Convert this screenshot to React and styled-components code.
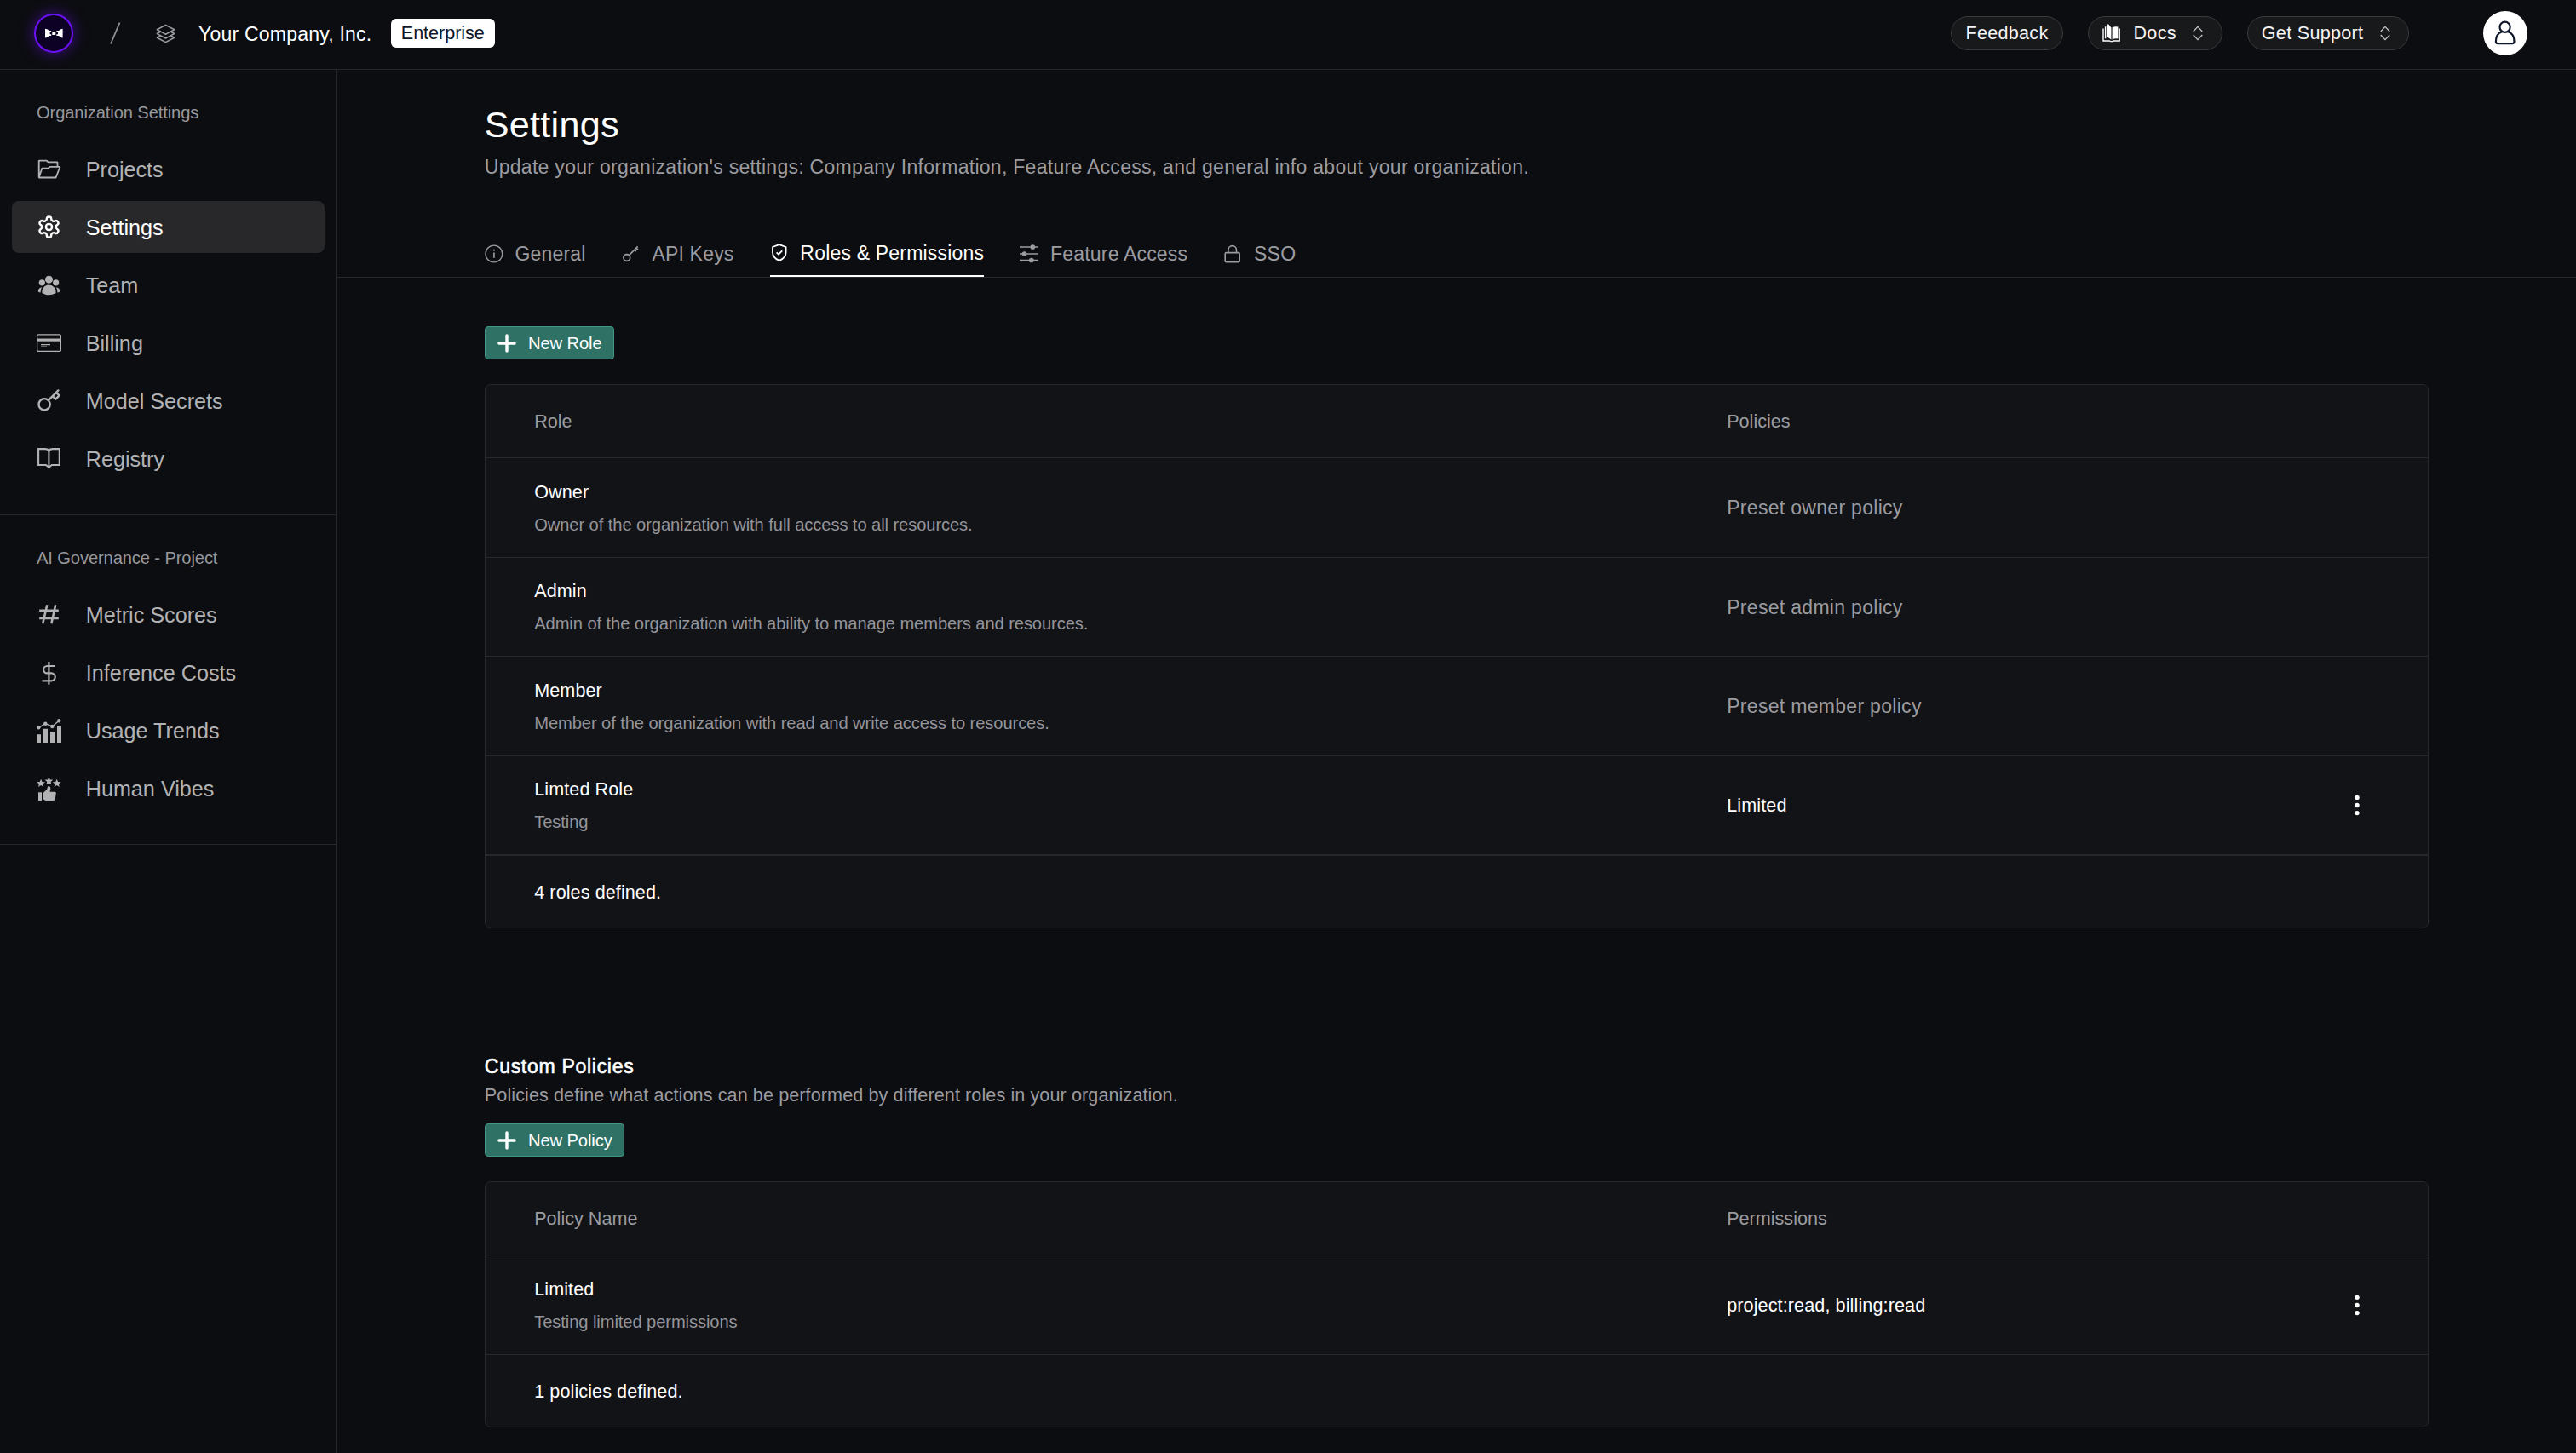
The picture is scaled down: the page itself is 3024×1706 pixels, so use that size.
import React from "react";
import styled, { createGlobalStyle } from "styled-components";
import { VscFolderOpened } from "react-icons/vsc";
import { LuSettings } from "react-icons/lu";
import { FiKey } from "react-icons/fi";
import { HiUserGroup, HiOutlineSquare3Stack3D } from "react-icons/hi2";

const GlobalStyle = createGlobalStyle`
  * {
    box-sizing: border-box;
  }
  body {
    margin: 0;
    background: #0c0d10;
    color: #ffffff;
    font-family: "Liberation Sans", Arial, sans-serif;
    font-size: 21.6px;
  }
`;

const Page = styled.div`
  display: flex;
  flex-direction: column;
  height: 1706px;
  overflow: hidden;
`;

const Header = styled.header`
  display: flex;
  align-items: center;
  justify-content: space-between;
  height: 82px;
  padding: 0 57px 3px 40px;
  border-bottom: 1px solid #27282b;
`;

const HeaderGroup = styled.div`
  display: flex;
  align-items: center;
`;

const Logo = styled.div`
  width: 46px;
  height: 46px;
  border: 2px solid #6a11f5;
  border-radius: 50%;
  background: #0e0126;
  box-shadow: 0 0 18px rgba(106, 17, 245, 0.55);
  & > svg {
    display: block;
    margin: -2px;
  }
`;

const Slash = styled.svg`
  margin-left: 43px;
`;

const StackIcon = styled(HiOutlineSquare3Stack3D)`
  width: 25px;
  height: 25px;
  margin-left: 40px;
  color: #9b9ba0;
`;

const Company = styled.div`
  margin-left: 26px;
  padding-top: 1px;
  font-size: 23.04px;
  line-height: 34px;
  letter-spacing: 0.2px;
`;

const PlanBadge = styled.div`
  margin-left: 22.5px;
  padding: 0 12px;
  border-radius: 6px;
  background: #ffffff;
  color: #0f172a;
  line-height: 34px;
  letter-spacing: -0.05px;
`;

const PillButton = styled.button`
  display: flex;
  align-items: center;
  gap: 14.4px;
  height: 40px;
  margin-left: ${props => (props.$first ? "0" : "29px")};
  padding: 0 16.3px;
  border: 1px solid #3a3a3d;
  border-radius: 20px;
  background: #18191b;
  color: #f4f4f5;
  font-family: inherit;
  font-size: 21.6px;
  letter-spacing: 0.28px;
`;

const Avatar = styled.div`
  width: 52px;
  height: 52px;
  margin-left: 87px;
  border-radius: 50%;
  background: #ffffff;
  color: #0f172a;
`;

const Body = styled.div`
  display: flex;
  flex: 1;
`;

const Sidebar = styled.nav`
  width: 396px;
  border-right: 1px solid #27282b;
`;

const NavSection = styled.section`
  padding: 36px 14px 28px;
  border-bottom: 1px solid #27282b;
`;

const NavHeading = styled.div`
  padding-left: 29px;
  margin-bottom: 21px;
  color: #97979c;
  font-size: 20.16px;
  line-height: 29px;
  letter-spacing: -0.12px;
`;

const NavItem = styled.div`
  display: flex;
  align-items: center;
  gap: 28.7px;
  height: 61px;
  margin-bottom: 7px;
  padding-left: 29px;
  border-radius: 8px;
  background: ${props => (props.$active ? "#28282a" : "transparent")};
  color: ${props => (props.$active ? "#ffffff" : "#b2b2b4")};
  font-size: 25.2px;
  & > svg {
    width: 29px;
    height: 29px;
  }
  & > span {
    padding-top: 2px;
  }
`;

const Main = styled.main`
  flex: 1;
`;

const PageHead = styled.div`
  padding: 35px 172.8px 0;
`;

const Title = styled.h1`
  margin: 0;
  font-size: 43.2px;
  font-weight: 400;
  line-height: 58px;
  letter-spacing: 0.25px;
`;

const Subtitle = styled.p`
  margin: 3.5px 0 0;
  color: #9b9ba0;
  font-size: 23.04px;
  line-height: 34.5px;
  letter-spacing: 0.27px;
`;

const TabBar = styled.div`
  display: flex;
  align-items: flex-end;
  gap: 42.2px;
  height: 113px;
  padding-left: 172.8px;
  border-bottom: 1px solid #27282b;
`;

const Tab = styled.div`
  display: flex;
  align-items: center;
  gap: 13.6px;
  padding-bottom: ${props => (props.$active ? "9.5px" : "10px")};
  border-bottom: ${props => (props.$active ? "2px solid #ffffff" : "none")};
  color: ${props => (props.$active ? "#ffffff" : "#9b9ba0")};
  font-size: 23.04px;
  line-height: 34px;
  letter-spacing: 0.18px;
`;

const Content = styled.div`
  padding: 57px 172.8px 0;
`;

const CreateButton = styled.button`
  display: flex;
  align-items: center;
  gap: 14.2px;
  height: 39px;
  padding: 1px 13.8px 0 14px;
  border: 1px solid #3f9786;
  border-radius: 4px;
  background: #2f7265;
  color: #ffffff;
  font-family: inherit;
  font-size: 20.16px;
  letter-spacing: -0.1px;
`;

const Table = styled.div`
  margin-top: 29px;
  border: 1px solid #27282b;
  border-radius: 7px;
  background: #121317;
`;

const TableRow = styled.div`
  display: grid;
  grid-template-columns: 1400px 1fr 40px;
  align-items: center;
  height: 116.5px;
  padding: 0 63px 0 57.4px;
  border-bottom: 1px solid #27282b;
`;

const TableHead = styled(TableRow)`
  height: 86px;
  color: #9b9ba0;
`;

const TableFoot = styled.div`
  display: flex;
  align-items: center;
  height: ${props => (props.$divided ? "85px" : "84px")};
  padding: 2px 0 0 57.4px;
  border-top: ${props => (props.$divided ? "1px solid #27282b" : "none")};
  letter-spacing: 0.08px;
`;

const Name = styled.div`
  line-height: 31px;
  letter-spacing: 0.08px;
`;

const Description = styled.div`
  margin-top: 9px;
  color: #94949a;
  font-size: 20.16px;
  line-height: 28px;
  letter-spacing: -0.09px;
`;

const Value = styled.div`
  padding-top: 2px;
  color: ${props => (props.$preset ? "#9b9ba0" : "#ffffff")};
  font-size: ${props => (props.$preset ? "23.04px" : "21.6px")};
  letter-spacing: ${props => (props.$preset ? "0.29px" : "0.1px")};
`;

const Dots = styled.svg`
  justify-self: center;
`;

const PolicySection = styled.section`
  padding-top: 144.5px;
`;

const SectionTitle = styled.h2`
  margin: 0;
  font-size: 23.04px;
  font-weight: 400;
  line-height: 34px;
  letter-spacing: 0.7px;
  -webkit-text-stroke: 0.6px #ffffff;
`;

const SectionText = styled.p`
  margin: 1px 0 17.5px;
  color: #9b9ba0;
  line-height: 32px;
  letter-spacing: 0.09px;
`;

const BillingIcon = () => (
  <svg viewBox="0 0 29 29" fill="none" stroke="currentColor">
    <rect x="0.6" y="4.8" width="27.8" height="19.6" rx="1.6" strokeWidth="1.3" />
    <path d="M0.6 11.1h27.8" strokeWidth="3.2" />
    <path d="M5 16.7h11M5 19.2h7" strokeWidth="1.3" />
  </svg>
);

const RegistryIcon = () => (
  <svg viewBox="0 0 29 29" fill="none" stroke="currentColor" strokeWidth="2.1">
    <path d="M2.1 3.1h8.2q3 0 4.1 2.6q1.1-2.6 4.1-2.6h8.3V22h-8.9l-3.5 2.6L10.9 22H2.1z" />
    <path d="M14.4 5.5V24" />
  </svg>
);

const HashIcon = () => (
  <svg viewBox="0 0 29 29" fill="none" stroke="currentColor" strokeWidth="2.6">
    <path d="M12.3 3.3L7.2 25.3M22.2 3.3L17.3 25.3M3.2 9.8h22.6M3.2 19h22.6" />
  </svg>
);

const DollarIcon = () => (
  <svg viewBox="0 0 29 29" fill="none" stroke="currentColor" strokeWidth="2.2">
    <path d="M14.4 2v26.7" />
    <path d="M21 7h-8.7a4.2 4.2 0 0 0 0 8.4h5a4.45 4.45 0 0 1 0 8.9H6.5" />
  </svg>
);

const TrendsIcon = () => (
  <svg viewBox="0 0 29 29" fill="currentColor">
    <path d="M0 19.3h5V29H0zM8 12.7h5V29H8zM16 16h5v13h-5zM24 9.7h5V29h-5z" />
    <circle cx="2.3" cy="11.3" r="2.2" />
    <circle cx="10.3" cy="6.7" r="2.2" />
    <circle cx="18.3" cy="10" r="2.2" />
    <circle cx="26.3" cy="3.2" r="2.2" />
    <path d="M2.3 11.3l8-4.6 8 3.3 8-6.8" fill="none" stroke="currentColor" strokeWidth="1.4" />
  </svg>
);

const star = "M0-4.9L1.4-1.6 4.9-1.4 2.2.9 3.1 4.3 0 2.4-3.1 4.3-2.2.9-4.9-1.4-1.4-1.6z";

const VibesIcon = () => (
  <svg viewBox="0 0 29 29" fill="currentColor">
    <path d={star} transform="translate(5.1 8.7)" />
    <path d={star} transform="translate(14.4 6)" />
    <path d={star} transform="translate(23.7 8.7)" />
    <path d="M2 19.3h4V29H2z" />
    <path d="M7.4 20.2L12 16l1-3.2q.7-1.2 2-.6 1.8 1 1.3 3.2l-.8 3.3H21q2 .2 1.9 1.9l-1.2 6.5Q21.3 29 19.6 29h-9L7.4 27.3z" />
  </svg>
);

const InfoIcon = () => (
  <svg width="22" height="22" viewBox="0 0 22 22" fill="none" stroke="currentColor" strokeWidth="1.4">
    <circle cx="10.9" cy="11" r="9.9" />
    <path d="M10.9 9.6v6.2" strokeWidth="1.7" />
    <circle cx="10.9" cy="6.7" r="1.1" fill="currentColor" stroke="none" />
  </svg>
);

const ApiKeyIcon = () => (
  <svg width="22" height="22" viewBox="0 0 22 22" fill="none" stroke="currentColor" strokeWidth="1.7">
    <circle cx="5.8" cy="15.5" r="3.9" />
    <path d="M8.5 12.7L18.7 2.4M15 6.3l1.8 1.8M17 4.3l2 2" />
  </svg>
);

const ShieldIcon = () => (
  <svg width="22" height="22" viewBox="0 0 22 22" fill="none" stroke="currentColor" strokeWidth="1.8" strokeLinejoin="round">
    <path d="M10.8 1.2L3 4v6.2c0 4.6 3 7.8 7.8 9.7 4.8-1.9 7.8-5.1 7.8-9.7V4z" />
    <path d="M7.6 10.3l2.4 2.4 4.2-4.4" />
  </svg>
);

const SlidersIcon = () => (
  <svg width="22" height="22" viewBox="0 0 22 22" stroke="currentColor" fill="currentColor" strokeWidth="1.5">
    <path d="M0 3h21.6M0 11h21.6M0 18.5h21.6" />
    <circle cx="15.3" cy="3" r="2.1" />
    <circle cx="5.6" cy="11" r="2.1" />
    <circle cx="13.8" cy="18.5" r="2.1" />
  </svg>
);

const LockIcon = () => (
  <svg width="22" height="22" viewBox="0 0 22 22" fill="none" stroke="currentColor" strokeWidth="1.6">
    <rect x="2.2" y="9.6" width="17" height="11" rx="1.4" />
    <path d="M5.9 9.6V6.4a4.8 4.8 0 0 1 9.6 0v3.2" />
  </svg>
);

const BooksIcon = () => (
  <svg width="22" height="22" viewBox="0 0 22 22" fill="#ffffff">
    <path d="M0.3 5.5h1.4v13.7h6.5l2.6 1 2-1h6.700V5.5h1.4v15.2h-8l-2 .9-2.500-.9H0.3z" />
    <path d="M2.9 3.5l1.4-.6v14.300H2.9z" />
    <path d="M5.2.4l2.2 0 3 4v14.200L5.2 15z" />
    <path d="M11.6 4.2q3-1.5 6.800-.8v14q-3.800-.5-6.800 1z" />
  </svg>
);

const Chevrons = () => (
  <svg width="22" height="22" viewBox="0 0 22 22" fill="none" stroke="#c8c8ca" strokeWidth="1.2">
    <path d="M5.7 9L11 3.3 16.3 9M5.7 13l5.3 5.7L16.3 13" />
  </svg>
);

const PlusIcon = () => (
  <svg width="22" height="22" viewBox="0 0 22 22" stroke="#ffffff" strokeWidth="3.4" strokeLinecap="round">
    <path d="M11 1.9v18.2M1.9 11h18.2" />
  </svg>
);

const MoreButton = () => (
  <Dots width="8" height="26" viewBox="0 0 8 26" fill="#ffffff">
    <circle cx="4" cy="4.4" r="2.7" />
    <circle cx="4" cy="13.5" r="2.7" />
    <circle cx="4" cy="22.6" r="2.7" />
  </Dots>
);

const orgLinks = [
  { label: "Projects", Icon: VscFolderOpened },
  { label: "Settings", Icon: LuSettings, active: true },
  { label: "Team", Icon: HiUserGroup },
  { label: "Billing", Icon: BillingIcon },
  { label: "Model Secrets", Icon: FiKey },
  { label: "Registry", Icon: RegistryIcon }
];

const governanceLinks = [
  { label: "Metric Scores", Icon: HashIcon },
  { label: "Inference Costs", Icon: DollarIcon },
  { label: "Usage Trends", Icon: TrendsIcon },
  { label: "Human Vibes", Icon: VibesIcon }
];

const tabs = [
  { label: "General", Icon: InfoIcon },
  { label: "API Keys", Icon: ApiKeyIcon },
  { label: "Roles & Permissions", Icon: ShieldIcon, active: true },
  { label: "Feature Access", Icon: SlidersIcon },
  { label: "SSO", Icon: LockIcon }
];

const roles = [
  {
    name: "Owner",
    description: "Owner of the organization with full access to all resources.",
    value: "Preset owner policy",
    preset: true
  },
  {
    name: "Admin",
    description:
      "Admin of the organization with ability to manage members and resources.",
    value: "Preset admin policy",
    preset: true
  },
  {
    name: "Member",
    description:
      "Member of the organization with read and write access to resources.",
    value: "Preset member policy",
    preset: true
  },
  { name: "Limted Role", description: "Testing", value: "Limited" }
];

const policies = [
  {
    name: "Limited",
    description: "Testing limited permissions",
    value: "project:read, billing:read"
  }
];

const NavGroup = ({ title, links }) => (
  <NavSection>
    <NavHeading>{title}</NavHeading>
    {links.map(({ label, Icon, active }) => (
      <NavItem key={label} $active={active}>
        <Icon />
        <span>{label}</span>
      </NavItem>
    ))}
  </NavSection>
);

const DataTable = ({ columns, rows, summary, divided }) => (
  <Table>
    <TableHead>
      <div>{columns[0]}</div>
      <div>{columns[1]}</div>
    </TableHead>
    {rows.map(row => (
      <TableRow key={row.name}>
        <div>
          <Name>{row.name}</Name>
          <Description>{row.description}</Description>
        </div>
        <Value $preset={row.preset}>{row.value}</Value>
        {!row.preset && <MoreButton />}
      </TableRow>
    ))}
    <TableFoot $divided={divided}>{summary}</TableFoot>
  </Table>
);

const App = () => (
  <Page>
    <GlobalStyle />
    <Header>
      <HeaderGroup>
        <Logo>
          <svg width="46" height="46" viewBox="0 0 46 46" fill="#ffffff">
            <path d="M13 17.8l3 .6 1.4 1.7h2.8v1.8h-1.6v2.3h1.6v1.8h-2.8L16 27.8l-3 .6z" />
            <path d="M33.6 17.8l-3 .6-1.4 1.7h-2.8v1.8H28v2.3h-1.6v1.8h2.8l1.4 1.8 3 .6z" />
            <path d="M21.3 21h4v4h-4z" />
          </svg>
        </Logo>
        <Slash width="13" height="26" viewBox="0 0 13 26">
          <path d="M1 25.5L11.5 0.5" stroke="#8f8f94" strokeWidth="1.9" />
        </Slash>
        <StackIcon />
        <Company>Your Company, Inc.</Company>
        <PlanBadge>Enterprise</PlanBadge>
      </HeaderGroup>
      <HeaderGroup>
        <PillButton $first>Feedback</PillButton>
        <PillButton>
          <BooksIcon />
          Docs
          <Chevrons />
        </PillButton>
        <PillButton>
          Get Support
          <Chevrons />
        </PillButton>
        <Avatar>
          <svg width="52" height="52" viewBox="0 0 52 52" fill="none" stroke="currentColor" strokeWidth="2.2">
            <circle cx="25.6" cy="18.8" r="6.1" />
            <path d="M22 24.3C17 26 14.9 30.5 14.9 35.8q0 2.3 2.3 2.3h17q2.3 0 2.3-2.3c0-5.3-2.1-9.8-7.1-11.5" />
          </svg>
        </Avatar>
      </HeaderGroup>
    </Header>
    <Body>
      <Sidebar>
        <NavGroup title="Organization Settings" links={orgLinks} />
        <NavGroup title="AI Governance - Project" links={governanceLinks} />
      </Sidebar>
      <Main>
        <PageHead>
          <Title>Settings</Title>
          <Subtitle>
            Update your organization's settings: Company Information, Feature
            Access, and general info about your organization.
          </Subtitle>
        </PageHead>
        <TabBar>
          {tabs.map(({ label, Icon, active }) => (
            <Tab key={label} $active={active}>
              <Icon />
              {label}
            </Tab>
          ))}
        </TabBar>
        <Content>
          <CreateButton>
            <PlusIcon />
            New Role
          </CreateButton>
          <DataTable
            columns={["Role", "Policies"]}
            rows={roles}
            summary="4 roles defined."
            divided
          />
          <PolicySection>
            <SectionTitle>Custom Policies</SectionTitle>
            <SectionText>
              Policies define what actions can be performed by different roles
              in your organization.
            </SectionText>
            <CreateButton>
              <PlusIcon />
              New Policy
            </CreateButton>
            <DataTable
              columns={["Policy Name", "Permissions"]}
              rows={policies}
              summary="1 policies defined."
            />
          </PolicySection>
        </Content>
      </Main>
    </Body>
  </Page>
);

export default App;
